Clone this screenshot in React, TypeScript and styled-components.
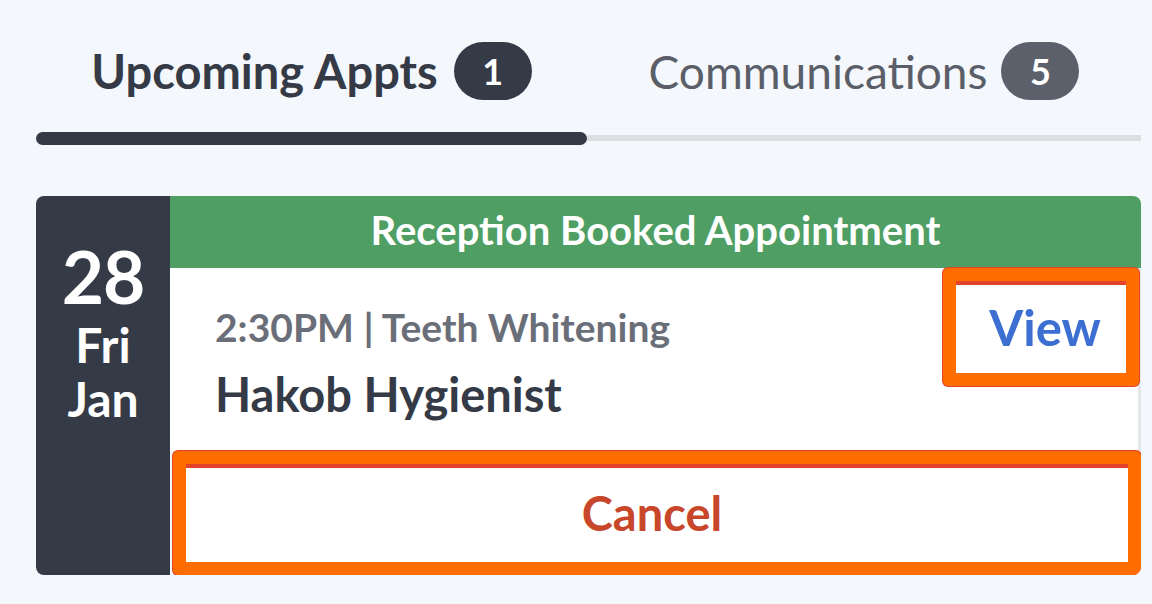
import React from "react";
import styled, { createGlobalStyle } from "styled-components";

const Global = createGlobalStyle`
  html, body { margin: 0; padding: 0; background: #f4f7fb; }
  body { font-family: Lato, "Open Sans", sans-serif; }
  * { box-sizing: border-box; }
`;

const Page = styled.div`
  width: 1152px;
  height: 604px;
  padding: 42px 11px 0 36px;
  background: #f4f7fb;
`;

const TabBar = styled.div`
  display: grid;
  grid-template-columns: 551px 1fr;
`;

const Tab = styled.div`
  display: flex;
  flex-direction: column;
  align-items: stretch;
  gap: 31px;
`;

const TabLabel = styled.div<{ $active?: boolean }>`
  display: flex;
  align-items: center;
  justify-content: center;
  gap: ${(p) => (p.$active ? "16px" : "14px")};
  height: 58px;
  font-size: ${(p) => (p.$active ? "47px" : "46px")};
  font-weight: ${(p) => (p.$active ? 700 : 400)};
  color: ${(p) => (p.$active ? "#353a47" : "#5a5e68")};
`;

const Badge = styled.span<{ $active?: boolean }>`
  display: inline-flex;
  align-items: center;
  justify-content: center;
  width: 78px;
  height: 58px;
  border-radius: 29px;
  background: ${(p) => (p.$active ? "#353a47" : "#5c606b")};
  color: #fff;
  font-size: 36px;
  font-weight: 700;
`;

const IndicatorTrack = styled.div`
  height: 14px;
  display: flex;
  align-items: center;
`;

const Indicator = styled.div<{ $active?: boolean }>`
  flex: 1;
  height: ${(p) => (p.$active ? "13px" : "6px")};
  border-radius: ${(p) => (p.$active ? "7px" : "0")};
  background: ${(p) => (p.$active ? "#353a47" : "#dcdee1")};
`;

const Card = styled.div`
  margin-top: 51px;
  height: 379px;
  display: flex;
  border-radius: 8px;
  overflow: hidden;
`;

const DateCol = styled.div`
  width: 134px;
  background: #353a47;
  color: #fff;
  display: flex;
  flex-direction: column;
  align-items: center;
  padding-top: 42px;
  font-weight: 700;
`;

const Day = styled.div`
  font-size: 73px;
  line-height: 76px;
  letter-spacing: -1px;
  margin-bottom: 4px;
`;

const DateLine = styled.div`
  font-size: 48px;
  line-height: 54px;
`;

const Main = styled.div`
  flex: 1;
  display: flex;
  flex-direction: column;
`;

const Header = styled.div`
  height: 72px;
  padding-bottom: 4px;
  background: #4f9f65;
  color: #fff;
  font-size: 40px;
  font-weight: 700;
  display: flex;
  align-items: center;
  justify-content: center;
`;

const Body = styled.div`
  flex: 1;
  background: #fff;
  border-right: 3px solid #e4e6e9;
  display: flex;
  justify-content: space-between;
  align-items: flex-start;
  padding-left: 45px;
`;

const Info = styled.div`
  display: flex;
  flex-direction: column;
  padding-top: 36px;
`;

const When = styled.div`
  font-size: 39px;
  line-height: 46px;
  font-weight: 700;
  color: #6a6e78;
`;

const Who = styled.div`
  font-size: 47px;
  line-height: 60px;
  font-weight: 700;
  color: #353a47;
  margin-top: 14px;
`;

const Highlight = styled.button`
  display: flex;
  align-items: center;
  justify-content: center;
  background: #fff;
  border: 13px solid #ff6d00;
  border-radius: 5px;
  box-shadow: inset 0 4px 0 #e3432b, 0 0 0 1px #e3432b;
  font-family: Lato, "Open Sans", sans-serif;
  font-weight: 700;
  font-size: 47px;
  cursor: pointer;
  padding: 0;
`;

const ViewButton = styled(Highlight)`
  width: 196px;
  height: 118px;
  color: #3c6fd1;
  font-size: 49px;
  padding-left: 8px;
  margin-right: -1px;
`;

const CancelButton = styled(Highlight)`
  height: 124px;
  width: calc(100% - 3px);
  margin-left: 3px;
  padding-right: 10px;
  color: #c8472a;
`;

export default function App() {
  return (
    <>
      <Global />
      <Page>
        <TabBar>
          <Tab>
            <TabLabel $active>
              Upcoming Appts <Badge $active>1</Badge>
            </TabLabel>
            <IndicatorTrack>
              <Indicator $active />
            </IndicatorTrack>
          </Tab>
          <Tab>
            <TabLabel>
              Communications <Badge>5</Badge>
            </TabLabel>
            <IndicatorTrack>
              <Indicator />
            </IndicatorTrack>
          </Tab>
        </TabBar>
        <Card>
          <DateCol>
            <Day>28</Day>
            <DateLine>Fri</DateLine>
            <DateLine>Jan</DateLine>
          </DateCol>
          <Main>
            <Header>Reception Booked Appointment</Header>
            <Body>
              <Info>
                <When>2:30PM | Teeth Whitening</When>
                <Who>Hakob Hygienist</Who>
              </Info>
              <ViewButton>View</ViewButton>
            </Body>
            <CancelButton>Cancel</CancelButton>
          </Main>
        </Card>
      </Page>
    </>
  );
}
